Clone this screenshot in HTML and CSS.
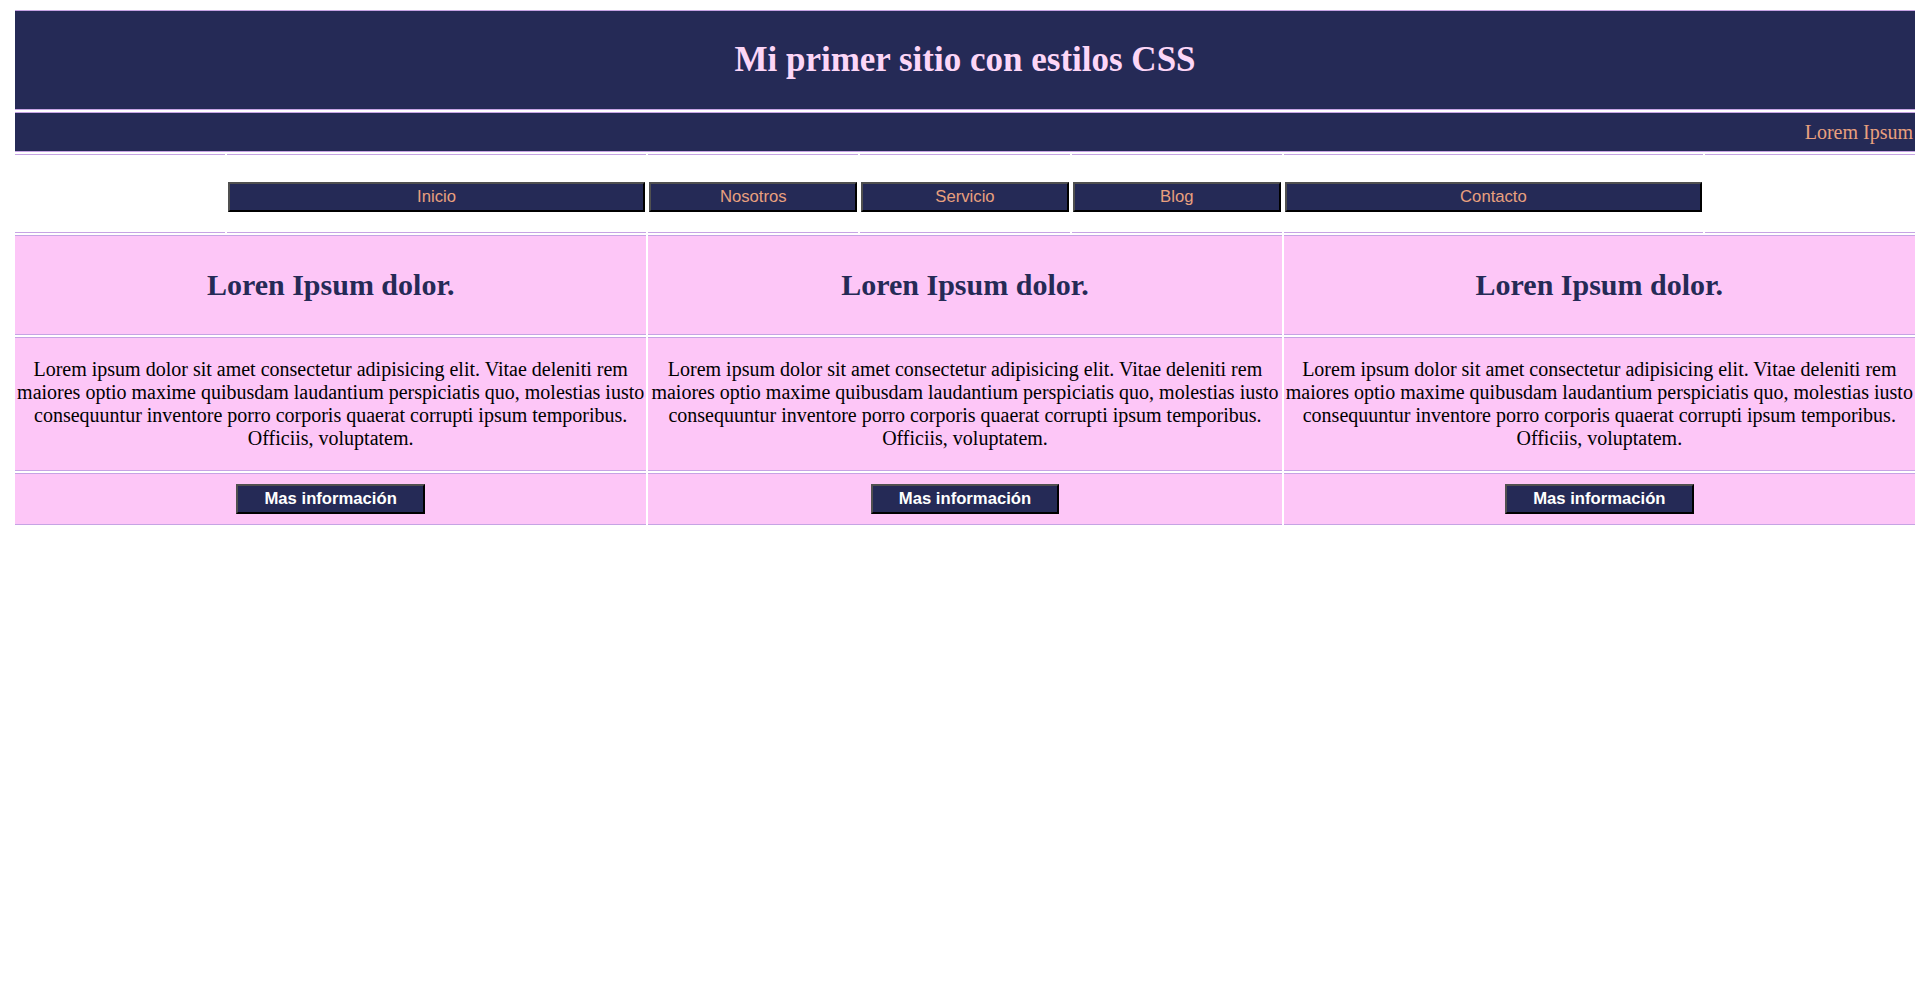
FILE: index.html
```html
<!DOCTYPE html>
<html lang="es">
<head>
<meta charset="utf-8">
<title>Mi primer sitio con estilos CSS</title>
<link rel="stylesheet" href="styles.css">
</head>
<body>
<div class="page">
  <div class="cell header"><h1 class="title">Mi primer sitio con estilos CSS</h1></div>
  <div class="cell bar"><span class="bar-text">Lorem Ipsum</span></div>

  <div class="cell nav"></div>
  <div class="cell nav"><button class="nav-btn">Inicio</button></div>
  <div class="cell nav"><button class="nav-btn">Nosotros</button></div>
  <div class="cell nav"><button class="nav-btn">Servicio</button></div>
  <div class="cell nav"><button class="nav-btn">Blog</button></div>
  <div class="cell nav"><button class="nav-btn">Contacto</button></div>
  <div class="cell nav"></div>

  <div class="cell card-head span2"><h2 class="card-title">Loren Ipsum dolor.</h2></div>
  <div class="cell card-head span3"><h2 class="card-title">Loren Ipsum dolor.</h2></div>
  <div class="cell card-head span2"><h2 class="card-title">Loren Ipsum dolor.</h2></div>

  <div class="cell card-body span2"><p class="card-text">Lorem ipsum dolor sit amet consectetur adipisicing elit. Vitae deleniti rem maiores optio maxime quibusdam laudantium perspiciatis quo, molestias iusto consequuntur inventore porro corporis quaerat corrupti ipsum temporibus. Officiis, voluptatem.</p></div>
  <div class="cell card-body span3"><p class="card-text">Lorem ipsum dolor sit amet consectetur adipisicing elit. Vitae deleniti rem maiores optio maxime quibusdam laudantium perspiciatis quo, molestias iusto consequuntur inventore porro corporis quaerat corrupti ipsum temporibus. Officiis, voluptatem.</p></div>
  <div class="cell card-body span2"><p class="card-text">Lorem ipsum dolor sit amet consectetur adipisicing elit. Vitae deleniti rem maiores optio maxime quibusdam laudantium perspiciatis quo, molestias iusto consequuntur inventore porro corporis quaerat corrupti ipsum temporibus. Officiis, voluptatem.</p></div>

  <div class="cell card-foot span2"><button class="more-btn">Mas información</button></div>
  <div class="cell card-foot span3"><button class="more-btn">Mas información</button></div>
  <div class="cell card-foot span2"><button class="more-btn">Mas información</button></div>
</div>
</body>
</html>
```

FILE: styles.css
```css
html, body {
  margin: 0;
  padding: 0;
  background: #ffffff;
}

body {
  font-family: "Liberation Serif", "Times New Roman", serif;
  font-size: 20px;
  color: #000000;
}

.page {
  display: grid;
  grid-template-columns: 1fr 2fr 1fr 1fr 1fr 2fr 1fr;
  gap: 2px;
  width: 1900px;
  margin: 10px 0 0 15px;
}

.cell {
  box-sizing: border-box;
  border-top: 1px solid #c6a3e4;
  border-bottom: 1px solid #c6a3e4;
}

.span2 { grid-column: span 2; }
.span3 { grid-column: span 3; }

.header {
  grid-column: 1 / -1;
  height: 100px;
  background: #252a56;
  display: flex;
  align-items: center;
  justify-content: center;
}

.title {
  margin: 0;
  font-size: 35px;
  font-weight: bold;
  color: #fcd6f7;
  line-height: 40px;
}

.bar {
  grid-column: 1 / -1;
  height: 40px;
  background: #252a56;
  display: flex;
  align-items: center;
  justify-content: flex-end;
  padding-right: 2px;
}

.bar-text {
  font-size: 20px;
  color: #e9a07e;
  line-height: 23px;
}

.nav {
  height: 79px;
  padding: 27px 1px 0;
  background: #ffffff;
}

.nav-btn {
  display: block;
  box-sizing: border-box;
  width: 100%;
  height: 30px;
  margin: 0;
  padding: 0;
  background: #252a56;
  color: #e9a07e;
  font-family: "Liberation Sans", Arial, sans-serif;
  font-size: 16.67px;
  border-style: solid;
  border-width: 2px;
  border-color: #505050 #000000 #000000 #505050;
}

.card-head {
  height: 100px;
  background: #fdc6f7;
  display: flex;
  align-items: center;
  justify-content: center;
}

.card-title {
  margin: 0;
  font-size: 30px;
  font-weight: bold;
  color: #252a56;
  line-height: 34px;
}

.card-body {
  height: 134px;
  background: #fdc6f7;
}

.card-text {
  margin: 20px 0;
  text-align: center;
  font-size: 20px;
  line-height: 23px;
}

.card-foot {
  height: 52px;
  background: #fdc6f7;
  display: flex;
  align-items: center;
  justify-content: center;
}

.more-btn {
  box-sizing: border-box;
  height: 30px;
  margin: 0;
  padding: 0 26px;
  background: #252a56;
  color: #ffffff;
  font-family: "Liberation Sans", Arial, sans-serif;
  font-size: 16.67px;
  font-weight: bold;
  border-style: solid;
  border-width: 2px;
  border-color: #505050 #000000 #000000 #505050;
}
```
